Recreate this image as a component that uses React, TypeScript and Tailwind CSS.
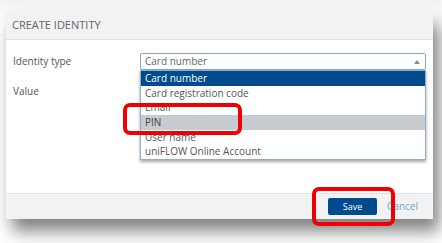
import React from "react";

const items = [
  "Card number",
  "Card registration code",
  "Email",
  "PIN",
  "User name",
  "uniFLOW Online Account",
];

export default function App() {
  return (
    <div
      className="relative w-[442px] h-[243px] overflow-hidden bg-[linear-gradient(180deg,#f2f2f2_0%,#fafafa_6%,#ffffff_10%)] pt-[12px] pl-[6px]"
      style={{ fontFamily: '"Open Sans", "Noto Sans", sans-serif' }}
    >
      <div className="relative flex flex-col w-[427px] h-[207px] bg-white shadow-[6px_12px_16px_rgba(0,0,0,0.5)]">
        {/* header */}
        <div className="flex items-center h-[28px] pl-[6px] bg-[#f1f2f3] border-b border-[#dde1e4]">
          <span className="text-[11px] text-[#666]">CREATE IDENTITY</span>
        </div>
        {/* body */}
        <div className="relative flex-1 pl-[7px] pt-[13px]">
          <div className="flex items-center h-[17px]">
            <span className="w-[127px] text-[10px] text-[#555]">Identity type</span>
            <div className="relative flex items-center w-[286px] h-[17px] border border-[#7fa8d2] rounded-[2px] pl-[4px] bg-white">
              <span className="text-[10px] text-[#666]">Card number</span>
              <svg className="absolute right-[5px] top-[6px]" width="6" height="4" viewBox="0 0 6 4">
                <path d="M0 4 L3 0 L6 4 Z" fill="#888" />
              </svg>
            </div>
          </div>
          <div className="flex items-center h-[17px] mt-[13px]">
            <span className="text-[10px] text-[#555]">Value</span>
          </div>
          {/* dropdown list overlay */}
          <div className="absolute left-[134px] top-[30px] w-[286px] flex flex-col bg-white border border-[#8eaed0] shadow-[0_2px_3px_rgba(0,0,0,0.35)]">
            {items.map((it) => (
              <div
                key={it}
                className={
                  it === "Card number"
                    ? "flex items-center h-[14.7px] pl-[4px] bg-[#004b8d] text-white text-[10px]"
                    : it === "PIN"
                    ? "flex items-center h-[14.7px] pl-[4px] bg-[#c6ccd2] text-[#444] text-[10px]"
                    : "flex items-center h-[14.7px] pl-[4px] text-[#555] text-[10px]"
                }
              >
                {it}
              </div>
            ))}
          </div>
        </div>
        {/* footer */}
        <div className="flex items-center justify-end h-[26px] bg-[#f1f2f4] border-t border-[#e2e5e8] pr-[15px]">
          <button className="w-[49px] h-[17px] bg-[#004b8d] rounded-[2px] text-white text-[9px] font-medium">Save</button>
          <span className="ml-[10px] text-[10px] text-[#7aa3cc]">Cancel</span>
        </div>
      </div>
      {/* red highlight boxes */}
      <div className="absolute left-[123px] top-[103px] w-[119px] h-[32px] border-[4px] border-[#f00000] rounded-[7px]" />
      <div className="absolute left-[312px] top-[187px] w-[83px] h-[39px] border-[4px] border-[#f00000] rounded-[7px]" />
    </div>
  );
}
